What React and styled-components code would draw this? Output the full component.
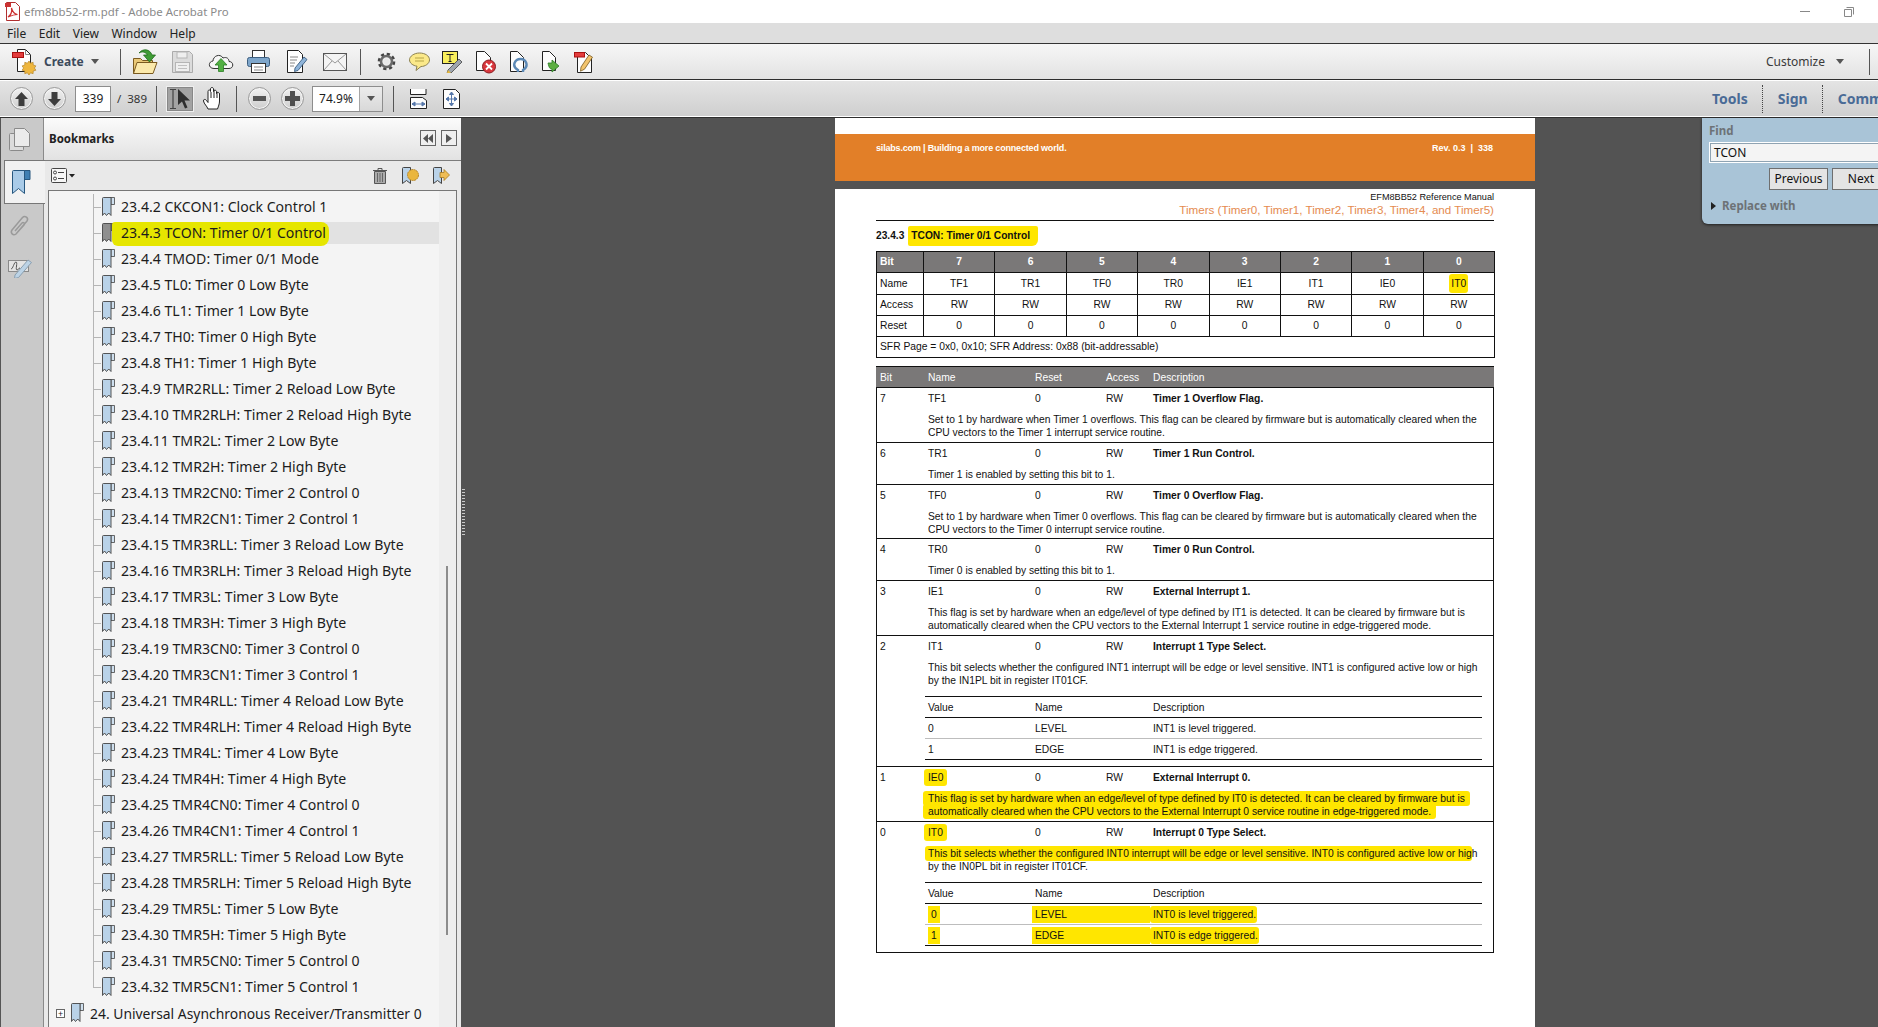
import React from 'react';
import styled, { createGlobalStyle } from 'styled-components';

const GlobalStyle = createGlobalStyle`
    html, body {
        margin: 0;
        padding: 0;
        height: 100%;
        overflow: hidden;
        background: #535353;
    }
    * {
        box-sizing: border-box;
    }
`;

const uiFont = `"Noto Sans", "Open Sans", sans-serif`;
const pdfFont = `"Liberation Sans", Arial, sans-serif`;

const Window = styled.div`
    width: 1878px;
    height: 1027px;
    display: flex;
    flex-direction: column;
    overflow: hidden;
    font-family: ${uiFont};
    color: #1c1c1c;
`;

/* ---- window chrome ---- */

const TitleBar = styled.div`
    height: 23px;
    background: #fff;
    display: flex;
    align-items: center;
    padding-left: 5px;
    gap: 3px;
`;

const TitleText = styled.span`
    font-size: 11.4px;
    color: #8a8a8a;
`;

const WindowButtons = styled.div`
    margin-left: auto;
    display: flex;
    align-items: center;
    gap: 34px;
    padding-right: 24px;
`;

const MenuBar = styled.div`
    height: 20px;
    background: #dedede;
    display: flex;
    align-items: center;
    padding-left: 7px;
    gap: 12.5px;
    font-size: 12px;
    color: #222;
`;

const ToolBar = styled.div`
    height: 37px;
    flex: none;
    display: flex;
    align-items: center;
    background: linear-gradient(#f6f6f6, #e3e3e3);
    border-top: 1px solid #333;
    border-bottom: 1px solid #2e2e2e;
    padding-left: 12px;
`;

const CreateLabel = styled.span`
    font-size: 12px;
    font-weight: 700;
    color: #3c4a5c;
    margin-left: 7px;
`;

const Caret = styled.span`
    width: 0;
    height: 0;
    margin-left: ${p => p.$gap ?? 7}px;
    border-left: 4px solid transparent;
    border-right: 4px solid transparent;
    border-top: 5px solid #555;
`;

const ToolSep = styled.span`
    width: 1px;
    height: ${p => p.$h || 26}px;
    background: #555;
    flex: none;
    margin-left: ${p => p.$left}px;
    margin-right: ${p => p.$right}px;
`;

const IconSlot = styled.span`
    width: ${p => p.$w}px;
    flex: none;
    display: flex;
    justify-content: center;
    align-items: center;
`;

const Customize = styled.span`
    margin-left: auto;
    font-size: 12px;
    color: #3a3a3a;
    display: flex;
    align-items: center;
`;

const NavBar = styled.div`
    height: 37px;
    flex: none;
    display: flex;
    align-items: center;
    background: linear-gradient(#e4e4e4, #cfcfcf);
    border-top: 1px solid #fff;
    border-bottom: 1px solid #fff;
    box-shadow: 0 1px 0 #2e2e2e;
    margin-bottom: 1px;
    padding-left: 10px;
    overflow: hidden;
`;

const RoundButton = styled.span`
    width: 23px;
    height: 23px;
    flex: none;
    border-radius: 50%;
    border: 1px solid #9a9a9a;
    background: linear-gradient(#f2f2f2, #cdcdcd);
    box-shadow: inset 0 0 0 1px #f4f4f4;
    display: flex;
    align-items: center;
    justify-content: center;
    margin-right: ${p => p.$right}px;
`;

const PageInput = styled.span`
    width: 36px;
    height: 26px;
    flex: none;
    background: #fff;
    border: 1px solid #8d8d8d;
    font-size: 12px;
    display: flex;
    align-items: center;
    justify-content: center;
    margin-right: 6px;
`;

const PageTotal = styled.span`
    font-size: 11.5px;
    color: #333;
    white-space: pre;
`;

const SelectButton = styled.span`
    width: 28px;
    height: 26px;
    flex: none;
    background: #a3a3a3;
    border: 1px solid #efefef;
    outline: 1px solid #888;
    outline-offset: -2px;
    display: flex;
    align-items: center;
    justify-content: center;
    margin-right: 9px;
`;

const ZoomBox = styled.span`
    width: 71px;
    height: 26px;
    flex: none;
    display: flex;
    background: #fff;
    border: 1px solid #8d8d8d;
    font-size: 12px;
`;

const ZoomValue = styled.span`
    flex: 1;
    display: flex;
    align-items: center;
    justify-content: center;
`;

const ZoomDrop = styled.span`
    width: 23px;
    background: linear-gradient(#ececec, #d8d8d8);
    border-left: 1px solid #a5a5a5;
    display: flex;
    align-items: center;
    justify-content: center;
`;

const PaneLinks = styled.div`
    margin-left: auto;
    width: 166px;
    flex: none;
    display: flex;
    align-items: center;
    height: 28px;
`;

const PaneLink = styled.span`
    font-size: 14px;
    font-weight: 700;
    color: #4a6b96;
    height: 28px;
    line-height: 28px;
    padding-right: 14px;
    margin-right: 15px;
    white-space: nowrap;
    border-right: ${p => (p.$last ? 'none' : '1px dotted #444')};
`;

/* ---- left side ---- */

const Workspace = styled.div`
    flex: 1;
    min-height: 0;
    display: flex;
    position: relative;
`;

const Rail = styled.div`
    width: 44px;
    flex: none;
    background: #c9c9c9;
    border-left: 1px solid #555;
    border-right: 1px solid #8a8a8a;
    display: flex;
    flex-direction: column;
    align-items: center;
`;

const RailSlot = styled.div`
    height: ${p => p.$h}px;
    width: 100%;
    padding-right: 5px;
    display: flex;
    align-items: center;
    justify-content: center;
`;

const ActiveTab = styled.div`
    width: 41px;
    height: 44px;
    margin-left: 2px;
    margin-right: -2px;
    padding-right: 6px;
    background: #f2f2f2;
    border: 1px solid #777;
    border-right: none;
    position: relative;
    z-index: 2;
    display: flex;
    align-items: center;
    justify-content: center;
`;

const Panel = styled.div`
    width: 417px;
    flex: none;
    display: flex;
    flex-direction: column;
    background: #e9e9e9;
`;

const PanelHeader = styled.div`
    height: 43px;
    flex: none;
    background: linear-gradient(#fbfbfb, #e2e2e2);
    border-bottom: 1px solid #7c7c7c;
    display: flex;
    align-items: center;
    padding: 0 4px 2px 5px;
    gap: 5px;
`;

const PanelTitle = styled.span`
    font-size: 11.5px;
    font-weight: 700;
    color: #222;
    margin-right: auto;
`;

const CollapseButton = styled.span`
    width: 16px;
    height: 16px;
    border: 1px solid #666;
    background: #efefef;
    display: flex;
    align-items: center;
    justify-content: center;
`;

const PanelTools = styled.div`
    height: 29px;
    flex: none;
    display: flex;
    align-items: center;
    padding-left: 7px;
`;

const ListBox = styled.div`
    flex: 1;
    min-height: 0;
    margin: 0 4px 0 4px;
    background: #f4f4f4;
    border: 1px solid #777;
    border-bottom: none;
    display: flex;
    overflow: hidden;
`;

const Tree = styled.div`
    flex: 1;
    padding-top: 3px;
`;

const Gutter = styled.div`
    width: 17px;
    flex: none;
    background: #eeeeee;
    position: relative;
`;

const GutterThumb = styled.div`
    position: absolute;
    left: 7px;
    top: 375px;
    width: 2px;
    height: 369px;
    background: #8c8c8c;
`;

const ChildRow = styled.div`
    height: 26px;
    position: relative;
    display: flex;
    align-items: center;
    padding-left: 53px;

    &::before {
        content: '';
        position: absolute;
        left: 44px;
        top: 0;
        height: ${p => (p.$last ? 13 : 26)}px;
        width: 1px;
        background: #b5b5b5;
    }
    &::after {
        content: '';
        position: absolute;
        left: 44px;
        top: 13px;
        width: 8px;
        height: 1px;
        background: #b5b5b5;
    }
`;

const RowText = styled.span`
    flex: 1;
    height: 22px;
    margin-left: 6px;
    font-size: 14.1px;
    line-height: 22px;
    color: #1c1c1c;
    white-space: nowrap;
    background: ${p => (p.$selected ? '#e2e2e2' : 'transparent')};
`;

const TreeMarker = styled.span`
    display: inline-block;
    height: 24px;
    margin: -1px 0 -1px -9px;
    padding: 0 3px 0 9px;
    background: #e6e600;
    border-radius: 3px 8px 8px 6px;
    position: relative;
`;

const ParentRow = styled.div`
    height: 26px;
    display: flex;
    align-items: center;
    padding-left: 7px;
    font-size: 13.9px;
    white-space: nowrap;
`;

const ParentLabel = styled.span`
    margin-left: 6px;
`;

const PlusBox = styled.span`
    width: 9px;
    height: 9px;
    border: 1px solid #666;
    background: #fff;
    flex: none;
    display: flex;
    align-items: center;
    justify-content: center;
    font-size: 9px;
    line-height: 7px;
    margin-right: 6px;
`;

const Splitter = styled.div`
    width: 5px;
    flex: none;
    background: #535353;
    display: flex;
    align-items: center;
    justify-content: center;
`;

const Grip = styled.div`
    width: 3px;
    height: 46px;
    margin-bottom: 46px;
    transform: translateY(-38px);
    background: repeating-linear-gradient(#c9c9c9 0 1px, transparent 1px 3px);
`;

/* ---- document ---- */

const DocView = styled.div`
    flex: 1;
    min-width: 0;
    background: #535353;
    overflow: hidden;
    padding-left: 369px;
    font-family: ${pdfFont};
    color: #111;
`;

const PrevPageEnd = styled.div`
    width: 700px;
    height: 63px;
    background: #fff;
    padding-top: 16px;
`;

const OrangeBand = styled.div`
    height: 47px;
    background: #e27f28;
    color: #fff;
    display: flex;
    justify-content: space-between;
    padding: 9px 42px 0 41px;
    font-size: 9px;
    font-weight: 700;
    line-height: 11px;
`;

const BandTagline = styled.span`
    letter-spacing: -0.18px;
`;

const Page = styled.div`
    width: 700px;
    margin-top: 8px;
    height: 900px;
    background: #fff;
    padding: 3px 41px 0 41px;
`;

const ManualName = styled.div`
    text-align: right;
    font-size: 9.15px;
    line-height: 11px;
    color: #111;
`;

const ChapterName = styled.div`
    text-align: right;
    font-size: 11.65px;
    line-height: 13px;
    color: #e58b50;
    padding-bottom: 4px;
    border-bottom: 1px solid #111;
`;

const SectionTitle = styled.div`
    margin-top: 9px;
    height: 12px;
    display: flex;
    align-items: center;
    line-height: 12px;
    font-size: 10.2px;
    font-weight: 700;
    white-space: nowrap;
`;

const TitleMark = styled.span`
    height: 20px;
    margin: -4px 0;
    line-height: 20px;
    padding: 0 8px 0 3px;
    margin-left: 4px;
    background: #ffe600;
    border-radius: 2px 2px 6px 2px;
`;

const Mark = styled.span`
    background: #ffe600;
    padding: ${p => p.$pad || '1px 4px'};
    margin: ${p => p.$margin || '0 -4px'};
    border-radius: 3px;
    -webkit-box-decoration-break: clone;
    box-decoration-break: clone;
`;

const RegTable = styled.table`
    margin-top: 9px;
    width: 618px;
    border-collapse: collapse;
    table-layout: fixed;
    font-size: 10.3px;
`;

const RegCol = styled.col`
    width: ${p => p.$w}px;
`;

const RegRow = styled.tr`
    height: ${p => p.$h}px;
    background: ${p => (p.$head ? '#7a7878' : '#fff')};
    color: ${p => (p.$head ? '#fff' : '#111')};
    font-weight: ${p => (p.$head ? 700 : 400)};
`;

const RegCell = styled.td`
    border: 1px solid #111;
    padding: 0 3px;
    line-height: 12px;
    text-align: ${p => (p.$left ? 'left' : 'center')};
    white-space: nowrap;
`;

const DescTable = styled.div`
    margin-top: 8px;
    width: 618px;
    border: 1px solid #111;
    border-top: none;
    font-size: 10.3px;
    line-height: 13px;
`;

const DescHead = styled.div`
    height: 21px;
    margin: 0 -1px;
    padding: 0 1px;
    background: #7a7878;
    color: #fff;
    font-weight: 700;
    border-top: 1px solid #111;
    display: grid;
    grid-template-columns: 51px 107px 71px 47px 1fr;
    align-items: center;
`;

const DescRow = styled.div`
    display: grid;
    grid-template-columns: 51px 107px 71px 47px 1fr;
    border-top: 1px solid #111;
    padding-top: 4px;
    padding-bottom: ${p => (p.$tail ? 6 : p.$tight ? 2 : 3)}px;
`;

const DescCell = styled.span`
    padding-left: ${p => (p.$bit ? 3 : 0)}px;
    font-weight: ${p => (p.$bold ? 700 : 400)};
    white-space: nowrap;
`;

const DescBody = styled.div`
    grid-column: 2 / 6;
    margin-top: 8px;
    white-space: nowrap;
`;

const ValueTable = styled.div`
    grid-column: 2 / 6;
    margin: 9px 11px 0 -3px;
    border-top: 1px solid #111;
`;

const ValueRow = styled.div`
    height: 21px;
    display: grid;
    grid-template-columns: 107px 118px 1fr;
    align-items: center;
    border-bottom: 1px solid ${p => (p.$soft ? '#bdbdbd' : '#111')};
`;

const ValueCell = styled.span`
    padding-left: 3px;
    white-space: nowrap;
`;

const ValueFill = styled.span`
    height: 17px;
    line-height: 17px;
    padding-left: 3px;
    background: #ffe600;
    white-space: nowrap;
`;

const ValueMark = styled.span`
    display: inline-block;
    height: 17px;
    line-height: 17px;
    padding: 0 3px;
    background: #ffe600;
`;

/* ---- find panel ---- */

const FindPanel = styled.div`
    position: absolute;
    left: 1702px;
    top: 0;
    width: 200px;
    height: 106px;
    background: #a9c4d7;
    border-bottom-left-radius: 6px;
    box-shadow: 0 1px 3px rgba(0, 0, 0, 0.6);
    padding: 5px 0 0 7px;
    font-family: ${uiFont};
`;

const FindLabel = styled.div`
    font-size: 11.5px;
    font-weight: 700;
    color: #6d7276;
    line-height: 16px;
`;

const FindInput = styled.div`
    margin-top: 3px;
    width: 200px;
    height: 21px;
    background: #f4f4f4;
    border: 1px solid #fff;
    outline: 1px solid #8fa3b2;
    outline-offset: -2px;
    font-size: 12px;
    line-height: 19px;
    padding-left: 4px;
    color: #111;
`;

const FindButtons = styled.div`
    display: flex;
    gap: 4px;
    margin: 5px 0 0 60px;
`;

const FindButton = styled.div`
    width: ${p => p.$w}px;
    height: 22px;
    flex: none;
    background: #e4e4e4;
    border: 1px solid #6f6f6f;
    font-size: 12px;
    line-height: 20px;
    text-align: center;
    color: #111;
`;

const ReplaceRow = styled.div`
    margin-top: 8px;
    display: flex;
    align-items: center;
    gap: 6px;
    font-size: 11.5px;
    font-weight: 700;
    color: #6d7276;
`;

const ReplaceArrow = styled.span`
    width: 0;
    height: 0;
    margin-left: 2px;
    border-top: 4px solid transparent;
    border-bottom: 4px solid transparent;
    border-left: 5px solid #222;
`;

/* ---- drawings ---- */

const Sheet = ({ x = 4, y = 1, w = 16, h = 21 }) => (
    <path
        d={`M${x + .5} ${y + .5}h${w - 6}l6 6v${h - 6}h${-w}z`}
        fill="#fdfdfd"
        stroke="#222"
    />
);

const PdfIcon = () => (
    <svg width="16" height="19" viewBox="0 0 16 19">
        <path d="M1.5.5h9l4 4v14h-13z" fill="#fff" stroke="#b03030" />
        <path d="M3 15c3-2 4-6 3.500-9 1 4 3 6 6 6.500-3 0-6 1-9.500 2.500z" fill="none" stroke="#c33" strokeWidth="1.200" />
        <rect x="0" y="1" width="6" height="4" fill="#c33" />
    </svg>
);

const CreateIcon = () => (
    <svg width="25" height="27" viewBox="0 0 25 27">
        <path d="M5.500 1.500h8l5 5v17h-13z" fill="#fff" stroke="#222" />
        <path d="M13.500 1.500v5h5" fill="none" stroke="#888" />
        <rect x="0.500" y="4.500" width="11" height="5" fill="#e33d3d" stroke="#a11" />
        <path d="M17 13l1.500 2.200 2.600-.9.100 2.700 2.700.900-1.500 2.100 1.500 2.200-2.700.800-.100 2.700-2.600-.9-1.500 2.200-1.600-2.200-2.600.9v-2.700l-2.700-.800 1.500-2.200-1.500-2.100 2.700-.9v-2.700l2.600.9z" fill="#efb73e" stroke="#b5852a" strokeWidth=".7" />
    </svg>
);

const OpenIcon = () => (
    <svg width="26" height="27" viewBox="0 0 26 27">
        <path d="M1.500 10.500h7l2 2h10v13h-19z" fill="#e9c877" stroke="#7a5a20" />
        <path d="M5 14.500h20l-4 11h-19.500z" fill="#fbe9ab" stroke="#7a5a20" />
        <path d="M7 5c4-5 11-4 13 2h3.500l-6 7-6-7h4c-2-3-5-4-8.500-2z" fill="#3f9c35" stroke="#1f6a1b" strokeWidth=".8" />
    </svg>
);

const SaveIcon = () => (
    <svg width="21" height="22" viewBox="0 0 21 22">
        <path d="M.5.5h17l3 3v18h-20z" fill="#dcdcdc" stroke="#ababab" />
        <rect x="5" y="1" width="10" height="6" fill="#efefef" stroke="#b5b5b5" />
        <rect x="3.500" y="11.500" width="14" height="9" fill="#efefef" stroke="#b5b5b5" />
        <path d="M6 14.500h9M6 17.500h9" stroke="#c0c0c0" />
    </svg>
);

const CloudIcon = () => (
    <svg width="26" height="20" viewBox="0 0 26 20">
        <path d="M6 16.500c-6 0-6-7-1-7.500 0-5 7-8 10-3 4-1.500 6 1 6 3.500 5 0 5 7 0 7z" fill="#f7f7f7" stroke="#333" />
        <path d="M13 6.500l6 6.500h-3.500v6.500h-5v-6.500h-3.500z" fill="#52b043" stroke="#2c7d27" strokeWidth=".8" />
    </svg>
);

const PrintIcon = () => (
    <svg width="23" height="25" viewBox="0 0 23 25">
        <rect x="5.500" y="1.500" width="12" height="8" fill="#fff" stroke="#333" />
        <rect x=".5" y="8.500" width="22" height="9" rx="2" fill="#7ea6cb" stroke="#3d5f80" />
        <rect x="4.500" y="14.500" width="14" height="9" fill="#fff" stroke="#333" />
        <path d="M7 18h9M7 21h9" stroke="#888" />
    </svg>
);

const EditFormIcon = () => (
    <svg width="22" height="25" viewBox="0 0 22 25">
        <path d="M1.500 1.500h11l4 4v18h-15z" fill="#fff" stroke="#222" />
        <path d="M4 8h8M4 11h7M4 14h5M4 17h4" stroke="#888" />
        <path d="M9 19l9-11 3 2.500-9 11-3.500 1z" fill="#8fb4d9" stroke="#2c4f73" strokeWidth=".8" />
    </svg>
);

const MailIcon = () => (
    <svg width="24" height="18" viewBox="0 0 24 18">
        <rect x=".5" y=".5" width="23" height="17" fill="#f4f4f4" stroke="#555" />
        <path d="M1 1l11 9 11-9M1 17l8-9M23 17l-8-9" fill="none" stroke="#999" />
    </svg>
);

const GearIcon = () => (
    <svg width="19" height="19" viewBox="0 0 19 19">
        <circle cx="9.500" cy="9.500" r="7" fill="none" stroke="#444" strokeWidth="3.600" strokeDasharray="3 2.500" />
        <circle cx="9.500" cy="9.500" r="5.500" fill="none" stroke="#6a6a6a" strokeWidth="2.600" />
        <circle cx="9.500" cy="9.500" r="2.600" fill="#e8e8e8" />
    </svg>
);

const CommentIcon = () => (
    <svg width="21" height="20" viewBox="0 0 21 20">
        <path d="M10.500 1c5.500 0 10 2.800 10 6.800s-4.500 6.700-8.500 6.700l-5 4 1-4.300c-4-.6-7.500-3-7.500-6.400s4.500-6.800 10-6.800z" fill="#fbe98a" stroke="#8a8050" />
        <path d="M6 6h9M6 9h9" stroke="#b6a548" />
    </svg>
);

const TextNoteIcon = () => (
    <svg width="21" height="23" viewBox="0 0 21 23">
        <rect x=".5" y="1.500" width="15" height="12" fill="#f8ee5c" stroke="#222" />
        <path d="M4.500 4.500h7M8 4.500v7M6.500 11.500h3" stroke="#222" fill="none" />
        <path d="M6 20l11-11 3 3-11 11-4 .5z" fill="#9fa6ad" stroke="#444" strokeWidth=".8" />
        <path d="M5 23l1-3 3 3z" fill="#e8b93a" />
    </svg>
);

const DeleteDocIcon = () => (
    <svg width="21" height="24" viewBox="0 0 21 24">
        <Sheet x={1} y={1} w={14} h={19} />
        <circle cx="14" cy="16.500" r="6.500" fill="#d8363c" stroke="#8b1d20" />
        <path d="M11 13.500l6 6M17 13.500l-6 6" stroke="#fff" strokeWidth="1.800" />
    </svg>
);

const OmegaDocIcon = () => (
    <svg width="19" height="24" viewBox="0 0 19 24">
        <Sheet x={1} y={1} w={13} h={20} />
        <path d="M9 22v-2c-7-4-3-11 2.500-11s9 7 2.500 11v2" fill="none" stroke="#5c89b6" strokeWidth="2.400" />
    </svg>
);

const ArrowDocIcon = () => (
    <svg width="21" height="24" viewBox="0 0 21 24">
        <Sheet x={1} y={1} w={13} h={19} />
        <path d="M7 13h4v-3l7 6-7 6v-3c-2 0-3-1-4-6z" fill="#5cae41" stroke="#2c7d27" strokeWidth=".8" />
    </svg>
);

const MarkupDocIcon = () => (
    <svg width="21" height="25" viewBox="0 0 21 25">
        <Sheet x={3} y={3} w={14} h={20} />
        <rect x=".5" y="3.500" width="10" height="4.500" fill="#e33d3d" stroke="#a11" />
        <path d="M7 18l8-12 3.500 2.200-8 12-4 2z" fill="#f2c46e" stroke="#7a5a20" strokeWidth=".8" />
    </svg>
);

const NavArrow = ({ down }) => (
    <svg width="13" height="14" viewBox="0 0 13 14" style={down ? { transform: 'rotate(180deg)' } : undefined}>
        <path d="M6.500 0l6.500 7h-3.500v7h-6v-7h-3.500z" fill="#3d3d3d" />
    </svg>
);

const SelectIcon = () => (
    <svg width="22" height="22" viewBox="0 0 22 22">
        <path d="M1 1.500h6M1 20.500h6M4 1.500v19" stroke="#444" strokeWidth="1.200" fill="none" />
        <path d="M9 1v16l4-3.500 3 7 2.500-1-3-7h5.500z" fill="#2f2f2f" />
    </svg>
);

const HandIcon = () => (
    <svg width="20" height="23" viewBox="0 0 20 23">
        <path d="M5 22c-1-3-4-5-4.500-8-.2-2 2-2 3-.5l1.500 2v-11c0-2 2.500-2 2.500 0v-2.500c0-2 3-2 3 0v2.500c0-2 3-1.500 3 0v2c0-1.800 3-1.500 3 .5v7c0 3-1 5-2 8z" fill="#fff" stroke="#222" />
        <path d="M8 5v6M11 3v8M14 5v6" stroke="#222" fill="none" />
    </svg>
);

const MinusGlyph = () => <svg width="13" height="5" viewBox="0 0 13 5"><rect width="13" height="5" fill="#555" /></svg>;

const PlusGlyph = () => (
    <svg width="15" height="15" viewBox="0 0 15 15">
        <path d="M5 0h5v5h5v5h-5v5h-5v-5h-5v-5h5z" fill="#4f4f4f" />
    </svg>
);

const FitWidthIcon = () => (
    <svg width="17" height="20" viewBox="0 0 17 20">
        <path d="M.5 0v5.500h15.500V0" fill="#fdfdfd" stroke="#222" />
        <path d="M.5 8.500h12l4 3v8h-16z" fill="#fdfdfd" stroke="#222" />
        <path d="M2 15h13M2 15l3-2v4zM15 15l-3-2v4z" fill="#5577aa" stroke="#5577aa" />
    </svg>
);

const FitPageIcon = () => (
    <svg width="17" height="20" viewBox="0 0 17 20">
        <path d="M.5.5h12l4 4v15h-16z" fill="#fdfdfd" stroke="#222" />
        <path d="M8.500 3v14M3 10h11M8.500 3l-2 2.500h4zM8.500 17l-2-2.500h4zM3 10l2.500-2v4zM14 10l-2.500-2v4z" fill="#5577aa" stroke="#5577aa" />
    </svg>
);

const PagesIcon = () => (
    <svg width="21" height="23" viewBox="0 0 21 23">
        <rect x=".5" y="5.500" width="14" height="17" rx="1" fill="#dcdcdc" stroke="#8a8a8a" />
        <path d="M5.500.5h10l5 5v13h-15z" fill="#ebebeb" stroke="#8a8a8a" />
    </svg>
);

const Ribbon = ({ gray }) => (
    <svg width="13" height="20" viewBox="0 0 13 20">
        <path d="M9 .5h3.500v7h-3.500z" fill={gray ? '#8a8a8a' : '#cfe0ef'} stroke="#444" strokeWidth=".8" />
        <path d="M.5 1.500q0-1 1-1h7.500v18l-2.200-2.500-2.300 2.500-2-2.500-2 2.500z" fill={gray ? '#8f8f8f' : '#b9d2e8'} stroke="#444" strokeWidth=".9" />
    </svg>
);

const LargeRibbon = () => (
    <svg width="19" height="24" viewBox="0 0 19 24">
        <path d="M12 .5h6v9h-6z" fill="#3e7fb3" stroke="#27577f" />
        <path d="M.5 1.500q0-1 1-1h11v23l-6-5-6 5z" fill="#a9cbe8" stroke="#27577f" />
    </svg>
);

const ClipIcon = () => (
    <svg width="21" height="25" viewBox="0 0 21 25">
        <path d="M7 21L18 8c2-3-2-6-4.500-3.500L3 17c-2 3 1 6 4 4L15 12c1.500-2-1-3-2-2L6 18" fill="none" stroke="#9a9a9a" strokeWidth="1.500" />
    </svg>
);

const SignIcon = () => (
    <svg width="24" height="19" viewBox="0 0 24 19">
        <rect x=".5" y="1.500" width="20" height="11" fill="#e4e4e4" stroke="#8a8a8a" />
        <path d="M3 10c2 0 3-7 5-7s-1 8 1 8 1-2 3-2" fill="none" stroke="#555" />
        <path d="M7 16L20 1l3.500 2.500-13 15-4 1z" fill="#bcd3e6" stroke="#8a9fb0" />
    </svg>
);

const OptionsIcon = () => (
    <svg width="24" height="15" viewBox="0 0 24 15">
        <rect x=".5" y=".5" width="15" height="14" rx="1" fill="#f7f7f7" stroke="#444" />
        <circle cx="4" cy="4.500" r="1.500" fill="none" stroke="#444" />
        <circle cx="4" cy="10.500" r="1.500" fill="none" stroke="#444" />
        <path d="M7 4.500h6M7 10.500h6" stroke="#444" />
        <path d="M18 6h6l-3 3.500z" fill="#222" />
    </svg>
);

const TrashIcon = () => (
    <svg width="14" height="16" viewBox="0 0 14 16">
        <path d="M0 2.500h14M5 2.500v-2h4v2" stroke="#555" fill="none" />
        <path d="M1.500 3.500h11v12h-11z" fill="#aaa" stroke="#555" />
        <path d="M4.500 5v9M7 5v9M9.500 5v9" stroke="#666" />
    </svg>
);

const AddBookmarkIcon = () => (
    <svg width="17" height="17" viewBox="0 0 17 17">
        <path d="M.5 1.500q0-1 1-1h7v16l-4-3-4 3z" fill="#b9d2e8" stroke="#444" />
        <circle cx="11" cy="8" r="5.500" fill="#eab63e" stroke="#b5852a" strokeDasharray="2 .6" />
    </svg>
);

const MoveBookmarkIcon = () => (
    <svg width="17" height="17" viewBox="0 0 17 17">
        <path d="M.5 1.500q0-1 1-1h7v16l-4-3-4 3z" fill="#b9d2e8" stroke="#444" />
        <path d="M7 5.500h4v-3l5.500 5.500-5.500 5.500v-3h-4z" fill="#efbd55" stroke="#a77b22" strokeWidth=".8" />
    </svg>
);

const TwinArrow = ({ double }) => (
    <svg width="10" height="9" viewBox="0 0 10 9">
        {double ? <path d="M5 0v9L0 4.500zM10 0v9L5 4.500z" fill="#555" /> : <path d="M2 0v9l6-4.500z" fill="#555" />}
    </svg>
);

/* ---- content ---- */

const bookmarks = [
    '23.4.2 CKCON1: Clock Control 1',
    '23.4.3 TCON: Timer 0/1 Control',
    '23.4.4 TMOD: Timer 0/1 Mode',
    '23.4.5 TL0: Timer 0 Low Byte',
    '23.4.6 TL1: Timer 1 Low Byte',
    '23.4.7 TH0: Timer 0 High Byte',
    '23.4.8 TH1: Timer 1 High Byte',
    '23.4.9 TMR2RLL: Timer 2 Reload Low Byte',
    '23.4.10 TMR2RLH: Timer 2 Reload High Byte',
    '23.4.11 TMR2L: Timer 2 Low Byte',
    '23.4.12 TMR2H: Timer 2 High Byte',
    '23.4.13 TMR2CN0: Timer 2 Control 0',
    '23.4.14 TMR2CN1: Timer 2 Control 1',
    '23.4.15 TMR3RLL: Timer 3 Reload Low Byte',
    '23.4.16 TMR3RLH: Timer 3 Reload High Byte',
    '23.4.17 TMR3L: Timer 3 Low Byte',
    '23.4.18 TMR3H: Timer 3 High Byte',
    '23.4.19 TMR3CN0: Timer 3 Control 0',
    '23.4.20 TMR3CN1: Timer 3 Control 1',
    '23.4.21 TMR4RLL: Timer 4 Reload Low Byte',
    '23.4.22 TMR4RLH: Timer 4 Reload High Byte',
    '23.4.23 TMR4L: Timer 4 Low Byte',
    '23.4.24 TMR4H: Timer 4 High Byte',
    '23.4.25 TMR4CN0: Timer 4 Control 0',
    '23.4.26 TMR4CN1: Timer 4 Control 1',
    '23.4.27 TMR5RLL: Timer 5 Reload Low Byte',
    '23.4.28 TMR5RLH: Timer 5 Reload High Byte',
    '23.4.29 TMR5L: Timer 5 Low Byte',
    '23.4.30 TMR5H: Timer 5 High Byte',
    '23.4.31 TMR5CN0: Timer 5 Control 0',
    '23.4.32 TMR5CN1: Timer 5 Control 1',
];

const regColumns = ['7', '6', '5', '4', '3', '2', '1', '0'];
const regNames = ['TF1', 'TR1', 'TF0', 'TR0', 'IE1', 'IT1', 'IE0'];

const Row = ({ bit, name, title, children, tail, tight, nameMark }) => (
    <DescRow $tail={tail} $tight={tight}>
        <DescCell $bit>{bit}</DescCell>
        <DescCell>{nameMark ? <Mark $pad="3px 4px">{name}</Mark> : name}</DescCell>
        <DescCell>0</DescCell>
        <DescCell>RW</DescCell>
        <DescCell $bold>{title}</DescCell>
        {children}
    </DescRow>
);

const ValueHead = () => (
    <ValueRow>
        <ValueCell>Value</ValueCell>
        <ValueCell>Name</ValueCell>
        <ValueCell>Description</ValueCell>
    </ValueRow>
);

const App = () => {
    return (
        <Window>
            <GlobalStyle />

            <TitleBar>
                <PdfIcon />
                <TitleText>efm8bb52-rm.pdf - Adobe Acrobat Pro</TitleText>
                <WindowButtons>
                    <svg width="10" height="2" viewBox="0 0 10 2"><rect width="10" height="1" fill="#888" /></svg>
                    <svg width="10" height="10" viewBox="0 0 10 10">
                        <path d="M2.500.5h7v7M.5 2.500h7v7h-7z" fill="none" stroke="#888" />
                    </svg>
                </WindowButtons>
            </TitleBar>

            <MenuBar>
                <span>File</span>
                <span>Edit</span>
                <span>View</span>
                <span>Window</span>
                <span>Help</span>
            </MenuBar>

            <ToolBar>
                <CreateIcon />
                <CreateLabel>Create</CreateLabel>
                <Caret />
                <ToolSep $left={21} $right={5} />
                <IconSlot $w={38}><OpenIcon /></IconSlot>
                <IconSlot $w={38}><SaveIcon /></IconSlot>
                <IconSlot $w={38}><CloudIcon /></IconSlot>
                <IconSlot $w={38}><PrintIcon /></IconSlot>
                <IconSlot $w={38}><EditFormIcon /></IconSlot>
                <IconSlot $w={38}><MailIcon /></IconSlot>
                <ToolSep $left={6} $right={9} />
                <IconSlot $w={33}><GearIcon /></IconSlot>
                <IconSlot $w={33}><CommentIcon /></IconSlot>
                <IconSlot $w={33}><TextNoteIcon /></IconSlot>
                <IconSlot $w={33}><DeleteDocIcon /></IconSlot>
                <IconSlot $w={33}><OmegaDocIcon /></IconSlot>
                <IconSlot $w={33}><ArrowDocIcon /></IconSlot>
                <IconSlot $w={33}><MarkupDocIcon /></IconSlot>
                <Customize>
                    Customize
                    <Caret $gap={11} />
                </Customize>
                <ToolSep $left={25} $right={8} />
            </ToolBar>

            <NavBar>
                <RoundButton $right={10}><NavArrow /></RoundButton>
                <RoundButton $right={9}><NavArrow down /></RoundButton>
                <PageInput>339</PageInput>
                <PageTotal>/  389</PageTotal>
                <ToolSep $left={9} $right={9} $h={26} />
                <SelectButton><SelectIcon /></SelectButton>
                <IconSlot $w={20}><HandIcon /></IconSlot>
                <ToolSep $left={13} $right={11} $h={26} />
                <RoundButton $right={10}><MinusGlyph /></RoundButton>
                <RoundButton $right={8}><PlusGlyph /></RoundButton>
                <ZoomBox>
                    <ZoomValue>74.9%</ZoomValue>
                    <ZoomDrop><Caret $gap={0} /></ZoomDrop>
                </ZoomBox>
                <ToolSep $left={10} $right={16} $h={26} />
                <IconSlot $w={17}><FitWidthIcon /></IconSlot>
                <IconSlot $w={49}><FitPageIcon /></IconSlot>
                <PaneLinks>
                    <PaneLink>Tools</PaneLink>
                    <PaneLink>Sign</PaneLink>
                    <PaneLink $last>Comment</PaneLink>
                </PaneLinks>
            </NavBar>

            <Workspace>
                <Rail>
                    <RailSlot $h={42}><PagesIcon /></RailSlot>
                    <ActiveTab><LargeRibbon /></ActiveTab>
                    <RailSlot $h={42}><ClipIcon /></RailSlot>
                    <RailSlot $h={44}><SignIcon /></RailSlot>
                </Rail>

                <Panel>
                    <PanelHeader>
                        <PanelTitle>Bookmarks</PanelTitle>
                        <CollapseButton><TwinArrow double /></CollapseButton>
                        <CollapseButton><TwinArrow /></CollapseButton>
                    </PanelHeader>
                    <PanelTools>
                        <OptionsIcon />
                        <IconSlot $w={290} />
                        <IconSlot $w={30}><TrashIcon /></IconSlot>
                        <IconSlot $w={30}><AddBookmarkIcon /></IconSlot>
                        <IconSlot $w={32}><MoveBookmarkIcon /></IconSlot>
                    </PanelTools>
                    <ListBox>
                        <Tree>
                            {bookmarks.map((label, i) => {
                                const selected = i === 1;
                                return (
                                    <ChildRow key={label} $last={i === bookmarks.length - 1}>
                                        <Ribbon gray={selected} />
                                        <RowText $selected={selected}>
                                            {selected ? <TreeMarker>{label}</TreeMarker> : label}
                                        </RowText>
                                    </ChildRow>
                                );
                            })}
                            <ParentRow>
                                <PlusBox>+</PlusBox>
                                <Ribbon />
                                <ParentLabel>24. Universal Asynchronous Receiver/Transmitter 0</ParentLabel>
                            </ParentRow>
                        </Tree>
                        <Gutter><GutterThumb /></Gutter>
                    </ListBox>
                </Panel>

                <Splitter><Grip /></Splitter>

                <DocView>
                    <PrevPageEnd>
                        <OrangeBand>
                            <BandTagline>silabs.com | Building a more connected world.</BandTagline>
                            <span>Rev. 0.3 &nbsp;|&nbsp; 338</span>
                        </OrangeBand>
                    </PrevPageEnd>

                    <Page>
                        <ManualName>EFM8BB52 Reference Manual</ManualName>
                        <ChapterName>Timers (Timer0, Timer1, Timer2, Timer3, Timer4, and Timer5)</ChapterName>
                        <SectionTitle>
                            23.4.3
                            <TitleMark>TCON: Timer 0/1 Control</TitleMark>
                        </SectionTitle>

                        <RegTable>
                            <colgroup>
                                <RegCol $w={47} />
                                {regColumns.map(c => <RegCol key={c} $w={71.375} />)}
                            </colgroup>
                            <tbody>
                                <RegRow $h={21} $head>
                                    <RegCell $left>Bit</RegCell>
                                    {regColumns.map(c => <RegCell key={c}>{c}</RegCell>)}
                                </RegRow>
                                <RegRow $h={22}>
                                    <RegCell $left>Name</RegCell>
                                    {regNames.map(n => <RegCell key={n}>{n}</RegCell>)}
                                    <RegCell><Mark $pad="4px 2px" $margin="0">IT0</Mark></RegCell>
                                </RegRow>
                                <RegRow $h={21}>
                                    <RegCell $left>Access</RegCell>
                                    {regColumns.map(c => <RegCell key={c}>RW</RegCell>)}
                                </RegRow>
                                <RegRow $h={21}>
                                    <RegCell $left>Reset</RegCell>
                                    {regColumns.map(c => <RegCell key={c}>0</RegCell>)}
                                </RegRow>
                                <RegRow $h={21}>
                                    <RegCell $left colSpan={9}>SFR Page = 0x0, 0x10; SFR Address: 0x88 (bit-addressable)</RegCell>
                                </RegRow>
                            </tbody>
                        </RegTable>

                        <DescTable>
                            <DescHead>
                                <DescCell $bit>Bit</DescCell>
                                <DescCell>Name</DescCell>
                                <DescCell>Reset</DescCell>
                                <DescCell>Access</DescCell>
                                <DescCell>Description</DescCell>
                            </DescHead>

                            <Row bit="7" name="TF1" title="Timer 1 Overflow Flag.">
                                <DescBody>
                                    Set to 1 by hardware when Timer 1 overflows. This flag can be cleared by firmware but is automatically cleared when the<br />
                                    CPU vectors to the Timer 1 interrupt service routine.
                                </DescBody>
                            </Row>
                            <Row bit="6" name="TR1" title="Timer 1 Run Control.">
                                <DescBody>Timer 1 is enabled by setting this bit to 1.</DescBody>
                            </Row>
                            <Row bit="5" name="TF0" title="Timer 0 Overflow Flag." tight>
                                <DescBody>
                                    Set to 1 by hardware when Timer 0 overflows. This flag can be cleared by firmware but is automatically cleared when the<br />
                                    CPU vectors to the Timer 0 interrupt service routine.
                                </DescBody>
                            </Row>
                            <Row bit="4" name="TR0" title="Timer 0 Run Control.">
                                <DescBody>Timer 0 is enabled by setting this bit to 1.</DescBody>
                            </Row>
                            <Row bit="3" name="IE1" title="External Interrupt 1.">
                                <DescBody>
                                    This flag is set by hardware when an edge/level of type defined by IT1 is detected. It can be cleared by firmware but is<br />
                                    automatically cleared when the CPU vectors to the External Interrupt 1 service routine in edge-triggered mode.
                                </DescBody>
                            </Row>
                            <Row bit="2" name="IT1" title="Interrupt 1 Type Select." tail>
                                <DescBody>
                                    This bit selects whether the configured INT1 interrupt will be edge or level sensitive. INT1 is configured active low or high<br />
                                    by the IN1PL bit in register IT01CF.
                                </DescBody>
                                <ValueTable>
                                    <ValueHead />
                                    <ValueRow $soft>
                                        <ValueCell>0</ValueCell>
                                        <ValueCell>LEVEL</ValueCell>
                                        <ValueCell>INT1 is level triggered.</ValueCell>
                                    </ValueRow>
                                    <ValueRow>
                                        <ValueCell>1</ValueCell>
                                        <ValueCell>EDGE</ValueCell>
                                        <ValueCell>INT1 is edge triggered.</ValueCell>
                                    </ValueRow>
                                </ValueTable>
                            </Row>
                            <Row bit="1" name="IE0" title="External Interrupt 0." nameMark>
                                <DescBody>
                                    <Mark $pad="2px 5px" $margin="0 -5px">
                                        This flag is set by hardware when an edge/level of type defined by IT0 is detected. It can be cleared by firmware but is
                                    </Mark><br />
                                    <Mark $pad="2px 5px" $margin="0 -5px">
                                        automatically cleared when the CPU vectors to the External Interrupt 0 service routine in edge-triggered mode.
                                    </Mark>
                                </DescBody>
                            </Row>
                            <Row bit="0" name="IT0" title="Interrupt 0 Type Select." tail nameMark>
                                <DescBody>
                                    <Mark $pad="2px 0 2px 3px" $margin="0 0 0 -3px">
                                        This bit selects whether the configured INT0 interrupt will be edge or level sensitive. INT0 is configured active low or hig
                                    </Mark>h<br />
                                    by the IN0PL bit in register IT01CF.
                                </DescBody>
                                <ValueTable>
                                    <ValueHead />
                                    <ValueRow $soft>
                                        <ValueCell><ValueMark>0</ValueMark></ValueCell>
                                        <ValueFill>LEVEL</ValueFill>
                                        <ValueCell><Mark $pad="3px 1px 3px 3px" $margin="0 0 0 -3px">INT0 is level triggered.</Mark></ValueCell>
                                    </ValueRow>
                                    <ValueRow>
                                        <ValueCell><ValueMark>1</ValueMark></ValueCell>
                                        <ValueFill>EDGE</ValueFill>
                                        <ValueCell><Mark $pad="3px 1px 3px 3px" $margin="0 0 0 -3px">INT0 is edge triggered.</Mark></ValueCell>
                                    </ValueRow>
                                </ValueTable>
                            </Row>
                        </DescTable>
                    </Page>
                </DocView>

                <FindPanel>
                    <FindLabel>Find</FindLabel>
                    <FindInput>TCON</FindInput>
                    <FindButtons>
                        <FindButton $w={59}>Previous</FindButton>
                        <FindButton $w={58}>Next</FindButton>
                    </FindButtons>
                    <ReplaceRow>
                        <ReplaceArrow />
                        Replace with
                    </ReplaceRow>
                </FindPanel>
            </Workspace>
        </Window>
    );
};

export default App;
